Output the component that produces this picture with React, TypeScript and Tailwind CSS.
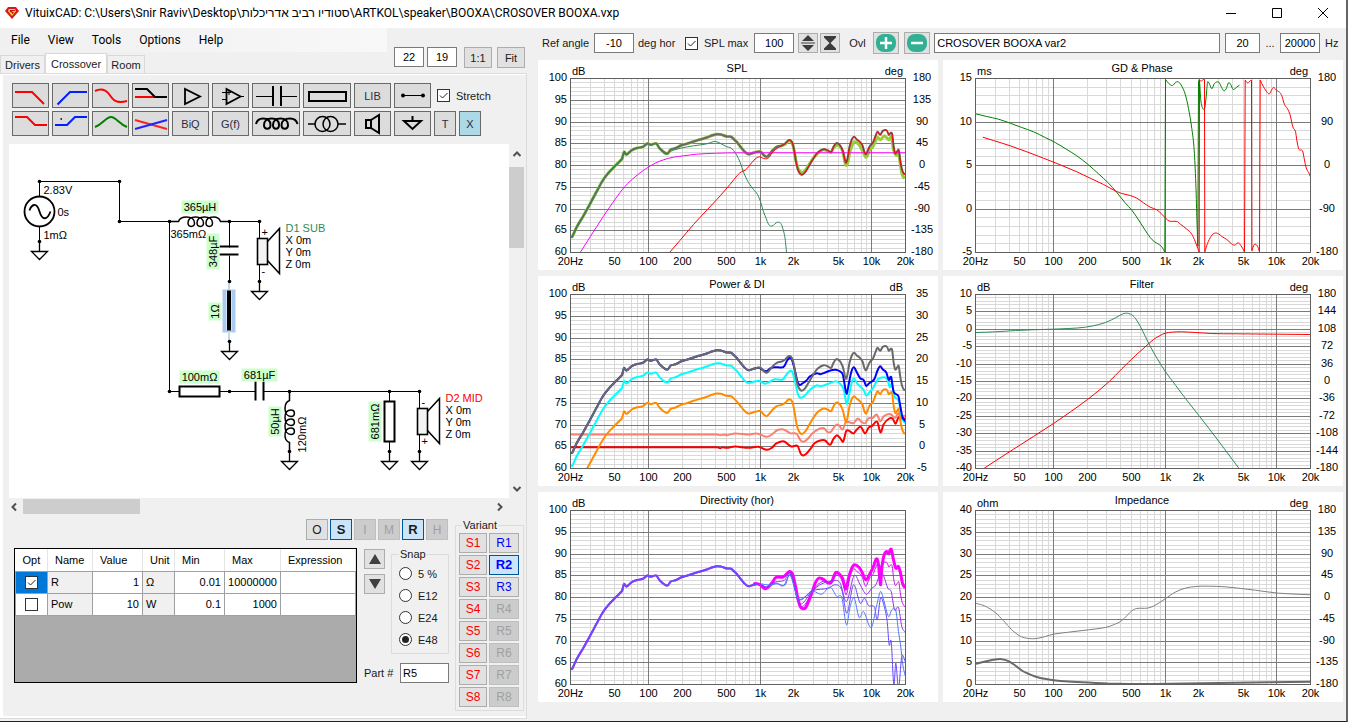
import { useState } from 'react';
import type { ReactNode } from 'react';
import clsx from 'clsx';

type Point = [number, number];

interface Trace {
  color: string;
  width?: number;
  points: Point[];
}

interface ChartProps {
  title: string;
  leftUnit: string;
  rightUnit?: string;
  leftLabels: string[];
  rightLabels?: string[];
  traces: Trace[];
}

// ---------------------------------------------------------------------------
// Measurement data. Three units per plot pixel, origin in the top left corner.
// ---------------------------------------------------------------------------

const sumLow: Point[] = [
  [2, 477], [6, 473], [18, 447], [38, 413], [58, 377], [78, 340], [98, 304], [114, 283], [133, 263],
  [148, 248], [155, 240], [158, 228], [161, 220], [167, 228], [175, 223], [184, 215], [197, 209], [217, 205], [231, 195],
  [241, 199], [257, 195], [267, 209], [279, 220], [291, 225], [301, 213], [315, 209], [331, 201], [349, 196], [369, 189],
  [389, 183], [409, 177], [424, 171], [439, 167], [451, 168], [469, 174], [482, 175], [491, 183], [501, 193], [511, 206],
  [521, 218], [529, 225], [537, 227], [549, 223], [561, 220],
];

const sumMid: Point[] = [
  [571, 220], [579, 229], [589, 235], [597, 227], [607, 215], [619, 205],
];

const sumHigh: Point[] = [
  [634, 201], [644, 195], [654, 185], [661, 186], [667, 197], [672, 221], [677, 253], [684, 278], [694, 289], [704, 281],
  [714, 265], [727, 243], [741, 223], [759, 212], [771, 215], [782, 220], [789, 205], [795, 196], [801, 194], [809, 201],
  [817, 217], [823, 243], [827, 253], [832, 235], [837, 205], [844, 183], [851, 175], [859, 183], [867, 189], [876, 201],
  [882, 221], [887, 227], [893, 213], [899, 201], [907, 193], [915, 173], [921, 160], [929, 169], [937, 157], [949, 156],
  [955, 169], [961, 163], [965, 167], [969, 201], [974, 225], [981, 217], [985, 215], [989, 245], [995, 275], [1003, 289],
];

const sum: Point[] = [...sumLow, ...sumMid, ...sumHigh];

const shift = (points: Point[], dy: number): Point[] => points.map(([x, y]) => [x, y + dy]);

const splTraces: Trace[] = [
  {
    color: '#9acd32',
    width: 3,
    points: [
      ...sumLow, ...sumMid, [634, 202], [644, 197], [654, 188], [661, 188], [667, 199], [672, 223], [677, 250], [684, 273],
      [694, 282], [704, 276], [727, 241], [741, 225], [759, 214], [782, 221], [790, 207], [801, 200], [809, 205], [817, 220],
      [825, 258], [831, 255], [838, 222], [844, 203], [851, 190], [867, 200], [880, 225], [887, 236], [899, 213], [907, 205],
      [915, 188], [921, 176], [929, 184], [942, 172], [955, 184], [963, 176], [969, 214], [977, 230], [985, 226], [990, 262],
      [996, 290], [1003, 300],
    ],
  },
  { color: '#696969', width: 2, points: sum },
  {
    color: '#ff00ff',
    points: [
      [29, 522], [59, 475], [99, 413], [134, 362], [164, 323], [194, 295], [224, 272], [254, 254], [279, 244], [309, 236],
      [339, 232], [379, 227], [439, 224], [499, 223], [700, 223], [1005, 223],
    ],
  },
  {
    color: '#2e8b57',
    points: [
      ...sumLow.slice(0, 22), [279, 224], [291, 227], [301, 218], [331, 209], [369, 202], [409, 196], [430, 189], [439, 190],
      [451, 195], [469, 205], [479, 207], [489, 216], [499, 230], [509, 252], [519, 281], [534, 312], [549, 333], [561, 348],
      [571, 372], [579, 400], [587, 420], [594, 437], [601, 443], [609, 440], [617, 433], [624, 431], [631, 435], [637, 450],
      [643, 475], [646, 500], [648, 522],
    ],
  },
  {
    color: '#ff0000',
    points: [
      [297, 522], [329, 485], [369, 438], [409, 395], [449, 352], [479, 317], [501, 290], [514, 279], [524, 275], [534, 265],
      [544, 252], [557, 239], [567, 235], [577, 239], [589, 241], [597, 235], [607, 220], [624, 207], ...sumHigh,
    ],
  },
];

const phaseTraces: Trace[] = [
  {
    color: '#008000',
    points: [
      [0, 106], [34, 114], [69, 122], [104, 134], [139, 147], [174, 160], [209, 177], [239, 192], [274, 213], [304, 232],
      [339, 259], [369, 286], [399, 314], [424, 342], [449, 373], [469, 395], [489, 424], [509, 455], [524, 477], [536, 489],
      [549, 497], [559, 505], [568, 521], [570, 3], [580, 15], [591, 21], [601, 11], [610, 11], [619, 23], [629, 47],
      [639, 90], [649, 150], [656, 215], [661, 315], [664, 415], [667, 503], [669, 8], [672, 8], [676, 65], [682, 90],
      [688, 87], [692, 55], [696, 12], [702, 17], [709, 31], [717, 15], [730, 11], [739, 28], [745, 37], [752, 31],
      [759, 13], [765, 17], [773, 33], [782, 27], [792, 20],
    ],
  },
  {
    color: '#ff0000',
    points: [
      [22, 176], [54, 186], [104, 202], [154, 220], [204, 239], [254, 259], [304, 280], [344, 299], [384, 318], [419, 337],
      [439, 345], [464, 351], [484, 359], [504, 373], [524, 386], [544, 394], [559, 407], [572, 421], [582, 428], [604, 429],
      [616, 438], [634, 452], [649, 467], [659, 489], [667, 510], [671, 521], [672, 3], [676, 8], [684, 3], [687, 3],
      [688, 520], [696, 495], [707, 473], [717, 464], [729, 466], [739, 474], [754, 483], [766, 494], [777, 500], [788, 493],
      [796, 501], [807, 520], [809, 5], [816, 13], [824, 7], [828, 5], [829, 517], [836, 498], [846, 503], [852, 520],
      [854, 5], [864, 25], [876, 43], [882, 46], [888, 35], [894, 27], [904, 36], [914, 43], [920, 55], [927, 78],
      [936, 91], [944, 110], [952, 145], [960, 159], [964, 185], [970, 212], [981, 217], [986, 240], [992, 268],
      [1000, 283], [1006, 297],
    ],
  },
];

const powerTraces: Trace[] = [
  { color: '#ff00ff', points: [[0, 261], [500, 261], [1005, 261]] },
  {
    color: '#ff0000',
    width: 2,
    points: [
      [0, 458], [439, 458], [449, 461], [456, 458], [467, 460], [494, 456], [534, 460], [564, 457], [589, 466], [604, 460],
      [616, 448], [639, 440], [662, 456], [681, 454], [691, 478], [699, 483], [709, 476], [722, 460], [732, 446], [749, 438],
      [764, 438], [779, 451], [789, 433], [799, 422], [809, 431], [818, 441], [828, 408], [849, 417], [859, 405], [871, 397],
      [884, 417], [894, 400], [904, 395], [920, 382], [930, 414], [939, 390], [956, 372], [967, 373], [975, 388], [984, 368],
      [992, 372], [999, 370], [1004, 378],
    ],
  },
  {
    color: '#fa8072',
    width: 2,
    points: [
      [0, 420], [439, 420], [449, 422], [464, 420], [469, 422], [494, 417], [534, 420], [559, 417], [589, 427], [604, 420],
      [619, 408], [639, 405], [659, 416], [679, 418], [689, 436], [699, 442], [712, 433], [726, 416], [744, 404], [760, 401],
      [772, 413], [782, 411], [794, 394], [804, 391], [817, 405], [826, 383], [849, 386], [862, 372], [874, 383], [884, 386],
      [894, 371], [906, 371], [919, 360], [929, 380], [939, 366], [952, 359], [962, 360], [974, 370], [982, 358], [992, 365],
      [1004, 364],
    ],
  },
  { color: '#ff8c00', width: 2, points: shift(sum, 130) },
  {
    color: '#00ffff',
    width: 2,
    points: [
      ...shift(sumLow, 39), [567, 259], [584, 268], [599, 261], [612, 254], [636, 255], [646, 243], [658, 229], [666, 233],
      [674, 263], [682, 298], [690, 310], [702, 304], [719, 285], [739, 272], [749, 275], [774, 268], [796, 260], [809, 268],
      [819, 283], [824, 308], [829, 328], [836, 300], [844, 263], [851, 252], [859, 266], [872, 278], [879, 286], [887, 303],
      [897, 293], [908, 280], [916, 265], [924, 253], [931, 250], [944, 249], [952, 258], [958, 278], [964, 268], [972, 306],
      [984, 318], [991, 353], [998, 378], [1004, 386],
    ],
  },
  {
    color: '#0000ff',
    width: 2,
    points: [
      ...sumLow, [567, 220], [579, 228], [589, 230], [599, 222], [611, 218], [634, 219], [642, 214], [650, 198], [657, 190],
      [664, 194], [672, 223], [680, 258], [687, 271], [697, 266], [707, 259], [719, 245], [739, 236], [749, 239], [764, 234],
      [779, 228], [796, 226], [809, 231], [817, 240], [822, 268], [828, 298], [834, 273], [842, 233], [850, 218], [859, 233],
      [869, 251], [879, 256], [887, 274], [896, 266], [904, 261], [912, 253], [921, 228], [929, 215], [937, 225], [947, 233],
      [955, 256], [962, 248], [969, 290], [979, 300], [984, 306], [990, 338], [996, 368], [1004, 380],
    ],
  },
  { color: '#696969', width: 2, points: sum },
];

const filterTraces: Trace[] = [
  {
    color: '#2e8b57',
    points: [
      [0, 114], [60, 112], [120, 108], [170, 106], [230, 104], [280, 102], [330, 98], [370, 90], [395, 82], [420, 70],
      [440, 59], [450, 56], [460, 57], [470, 62], [480, 72], [495, 97], [510, 127], [525, 157], [545, 192], [570, 232],
      [600, 272], [640, 325], [700, 401], [790, 521],
    ],
  },
  {
    color: '#ff0000',
    points: [
      [26, 521], [114, 464], [234, 387], [336, 315], [399, 263], [439, 223], [479, 184], [509, 157], [534, 135], [554, 123],
      [569, 116], [589, 113], [619, 112], [659, 114], [709, 117], [779, 118], [1008, 120],
    ],
  },
];

const directivityTraces: Trace[] = [
  { color: '#ff00ff', width: 2, points: sumLow },
  {
    color: '#ff00ff',
    width: 3,
    points: [
      [549, 221], [554, 219], [569, 223], [584, 235], [594, 229], [606, 215], [616, 201], [636, 200], [646, 193],
      [657, 183], [666, 191], [674, 223], [682, 263], [689, 288], [697, 295], [706, 291], [714, 273], [724, 248], [734, 218],
      [744, 203], [756, 205], [774, 218], [784, 213], [794, 188], [804, 188], [816, 203], [826, 236], [834, 203], [844, 173],
      [852, 163], [866, 171], [876, 188], [886, 208], [899, 188], [907, 173], [918, 145], [924, 163], [930, 223], [934, 173],
      [941, 133], [949, 123], [954, 130], [962, 116], [969, 148], [976, 173], [984, 168], [990, 188], [996, 218], [1004, 233],
    ],
  },
  { color: '#c814f0', points: sumHigh },
  {
    color: '#9630f0',
    points: [
      [571, 222], [589, 230], [607, 217], [624, 213], [642, 209], [659, 188], [684, 273], [697, 278], [724, 243], [754, 220],
      [794, 210], [809, 218], [828, 273], [851, 195], [869, 223], [887, 251], [904, 233], [916, 223], [930, 188], [939, 195],
      [952, 233], [962, 243], [972, 298], [984, 291], [994, 348], [1004, 366],
    ],
  },
  {
    color: '#6446ff',
    points: [
      [571, 222], [591, 230], [614, 218], [644, 223], [659, 190], [684, 266], [724, 241], [774, 233], [794, 223], [814, 238],
      [829, 308], [849, 223], [869, 278], [882, 263], [894, 285], [912, 290], [920, 328], [930, 263], [940, 283], [950, 333],
      [956, 403], [962, 393], [970, 523], [976, 458], [984, 533], [994, 438], [1004, 453],
    ],
  },
  {
    color: '#5078ff',
    points: [
      [571, 220], [600, 224], [620, 220], [639, 226], [659, 195], [682, 263], [709, 255], [729, 243], [754, 251], [779, 230],
      [799, 258], [814, 261], [828, 343], [839, 288], [851, 263], [866, 321], [879, 303], [902, 351], [919, 283], [930, 243],
      [938, 263], [954, 318], [964, 298], [976, 300], [984, 363], [990, 403], [997, 463], [1004, 496],
    ],
  },
  { color: '#644cff', width: 2, points: sumLow },
];

const impedanceTraces: Trace[] = [
  {
    color: '#808080',
    points: [
      [0, 278], [29, 287], [59, 306], [84, 331], [109, 358], [134, 377], [159, 384], [184, 384], [209, 378], [234, 371],
      [279, 365], [339, 358], [389, 351], [414, 343], [439, 330], [469, 301], [484, 294], [514, 293], [534, 287], [569, 265],
      [599, 245], [629, 233], [659, 228], [699, 227], [749, 229], [839, 239], [909, 248], [1008, 253],
    ],
  },
  {
    color: '#696969',
    width: 2,
    points: [
      [0, 460], [29, 453], [59, 447], [79, 446], [99, 452], [119, 465], [139, 480], [159, 490], [189, 501], [234, 509],
      [279, 513], [339, 516], [429, 520], [579, 520], [679, 518], [779, 517], [879, 515], [1008, 514],
    ],
  },
];

const splAxis = ['100', '95', '90', '85', '80', '75', '70', '65', '60'];
const phaseAxis = ['180', '135', '90', '45', '0', '-45', '-90', '-135', '-180'];

const charts: ChartProps[] = [
  { title: 'SPL', leftUnit: 'dB', rightUnit: 'deg', leftLabels: splAxis, rightLabels: phaseAxis, traces: splTraces },
  {
    title: 'GD & Phase',
    leftUnit: 'ms',
    rightUnit: 'deg',
    leftLabels: ['15', '10', '5', '0', '-5'],
    rightLabels: ['180', '90', '0', '-90', '-180'],
    traces: phaseTraces,
  },
  {
    title: 'Power & DI',
    leftUnit: 'dB',
    rightUnit: 'dB',
    leftLabels: splAxis,
    rightLabels: ['35', '30', '25', '20', '15', '10', '5', '0', '-5'],
    traces: powerTraces,
  },
  {
    title: 'Filter',
    leftUnit: 'dB',
    rightUnit: 'deg',
    leftLabels: ['10', '5', '0', '-5', '-10', '-15', '-20', '-25', '-30', '-35', '-40'],
    rightLabels: ['180', '144', '108', '72', '36', '0', '-36', '-72', '-108', '-144', '-180'],
    traces: filterTraces,
  },
  { title: 'Directivity (hor)', leftUnit: 'dB', leftLabels: splAxis, traces: directivityTraces },
  {
    title: 'Impedance',
    leftUnit: 'ohm',
    rightUnit: 'deg',
    leftLabels: ['40', '35', '30', '25', '20', '15', '10', '5', '0'],
    rightLabels: phaseAxis,
    traces: impedanceTraces,
  },
];

// ---------------------------------------------------------------------------
// Chart
// ---------------------------------------------------------------------------

const PLOT = { x: 32, y: 18, w: 335, h: 174 };

const freqLabels: [number, string][] = [
  [20, '20Hz'], [50, '50'], [100, '100'], [200, '200'], [500, '500'],
  [1000, '1k'], [2000, '2k'], [5000, '5k'], [10000, '10k'], [20000, '20k'],
];

const gridFreqs = [10, 100, 1000, 10000]
  .flatMap((decade) => [1, 2, 3, 4, 5, 6, 7, 8, 9].map((n) => n * decade))
  .filter((f) => f > 20 && f < 20000);

const freqX = (f: number) => Math.round(PLOT.x + (PLOT.w * Math.log10(f / 20)) / 3) + 0.5;

/** A phase wrap: the curve jumps over most of the plot height */
const isWrap = (a: number[], b: number[]) => Math.abs(a[1] - b[1]) > 60 && Math.abs(a[0] - b[0]) < 2;

function tracePath(points: Point[]) {
  const p = points.map(([x, y]) => [PLOT.x + 0.5 + x / 3, PLOT.y + 0.5 + y / 3]);
  let d = `M${p[0][0].toFixed(1)} ${p[0][1].toFixed(1)}`;
  for (let i = 1; i < p.length; i++) {
    const a = p[i - 1];
    const b = p[i];
    if (isWrap(a, b)) {
      d += `L${b[0].toFixed(1)} ${b[1].toFixed(1)}`;
      continue;
    }
    const before = i > 1 && !isWrap(p[i - 2], a) ? p[i - 2] : a;
    const after = i < p.length - 1 && !isWrap(b, p[i + 1]) ? p[i + 1] : b;
    // keep the handles inside the segment so that long steps do not overshoot
    const step = b[0] - a[0];
    const slopeIn = (b[1] - before[1]) / (b[0] - before[0] || 1);
    const slopeOut = (after[1] - a[1]) / (after[0] - a[0] || 1);
    const c1 = [a[0] + step / 3, a[1] + (slopeIn * step) / 3];
    const c2 = [b[0] - step / 3, b[1] - (slopeOut * step) / 3];
    d += `C${[...c1, ...c2, ...b].map((n) => n.toFixed(1)).join(' ')}`;
  }
  return d;
}

function Chart({ title, leftUnit, rightUnit, leftLabels, rightLabels, traces }: ChartProps) {
  const divisions = leftLabels.length - 1;
  const rowY = (i: number, of: number) => Math.round(PLOT.y + (PLOT.h * i) / of) + 0.5;
  const clipId = `plot-${title.replace(/\W/g, '')}`;
  const right = PLOT.x + PLOT.w;
  const bottom = PLOT.y + PLOT.h;

  return (
    <figure className="bg-white">
      <svg viewBox="0 0 400 210" role="img" aria-label={title} className="block h-auto w-full text-[11px]" fill="black">
        <clipPath id={clipId}>
          <rect x={PLOT.x} y={PLOT.y} width={PLOT.w + 1} height={PLOT.h + 1} />
        </clipPath>

        <g stroke="#d9d9d9" shapeRendering="crispEdges">
          {Array.from({ length: divisions * 5 }, (_, i) => (
            <line key={i} x1={PLOT.x} x2={right} y1={rowY(i, divisions * 5)} y2={rowY(i, divisions * 5)} />
          ))}
          {gridFreqs.map((f) => (
            <line key={f} x1={freqX(f)} x2={freqX(f)} y1={PLOT.y} y2={bottom} />
          ))}
        </g>
        <g stroke="#7b7b7b" shapeRendering="crispEdges">
          {leftLabels.map((label, i) => (
            <line key={label} x1={PLOT.x} x2={right} y1={rowY(i, divisions)} y2={rowY(i, divisions)} />
          ))}
          {[100, 1000, 10000].map((f) => (
            <line key={f} x1={freqX(f)} x2={freqX(f)} y1={PLOT.y} y2={bottom} />
          ))}
        </g>

        <g clipPath={`url(#${clipId})`} fill="none" strokeLinejoin="round">
          {traces.map((trace, i) => (
            <path key={i} d={tracePath(trace.points)} stroke={trace.color} strokeWidth={trace.width ?? 1} />
          ))}
        </g>
        <rect x={PLOT.x + 0.5} y={PLOT.y + 0.5} width={PLOT.w} height={PLOT.h} fill="none" stroke="#606060" shapeRendering="crispEdges" />

        <text x={199} y={12} textAnchor="middle">{title}</text>
        <text x={34} y={15}>{leftUnit}</text>
        {rightUnit && <text x={365} y={15} textAnchor="end">{rightUnit}</text>}
        {leftLabels.map((label, i) => (
          <text key={label} x={29} y={rowY(i, divisions) + 2.5} textAnchor="end">{label}</text>
        ))}
        {rightLabels?.map((label, i) => (
          <text key={label} x={384} y={rowY(i, divisions) + 2.5} textAnchor="middle">{label}</text>
        ))}
        {freqLabels.map(([f, label]) => (
          <text key={f} x={freqX(f)} y={205} textAnchor="middle">{label}</text>
        ))}
      </svg>
    </figure>
  );
}

// ---------------------------------------------------------------------------
// Small controls
// ---------------------------------------------------------------------------

function CheckBox({ name, defaultChecked }: { name?: string; defaultChecked?: boolean }) {
  return (
    <span className="relative block size-[13px]">
      <input
        type="checkbox"
        aria-label={name}
        defaultChecked={defaultChecked}
        className="peer block size-[13px] appearance-none border border-[#333] bg-white"
      />
      <svg viewBox="0 0 13 13" className="pointer-events-none absolute inset-0 hidden peer-checked:block" fill="none" stroke="#222" aria-hidden="true">
        <path d="M3 6.500l2.500 2.500L10.500 4" />
      </svg>
    </span>
  );
}

function Check({ label, defaultChecked }: { label: string; defaultChecked?: boolean }) {
  return (
    <label className="inline-flex items-center gap-[6px]">
      <CheckBox defaultChecked={defaultChecked} />
      {label}
    </label>
  );
}

function NumberBox({ label, value, className }: { label: string; value: string; className: string }) {
  return (
    <input
      aria-label={label}
      defaultValue={value}
      className={clsx('h-[20px] border border-[#7a7a7a] bg-white px-[2px] text-black', className)}
    />
  );
}

function ToolButton({ label, children, className }: { label: string; children: ReactNode; className?: string }) {
  return (
    <button
      type="button"
      aria-label={label}
      className={clsx(
        'flex h-[25px] items-center justify-center border border-[#696969] text-[11px] text-[#2b2b45]',
        className ?? 'w-[37px] bg-[#dcdcdc]',
      )}
    >
      {children}
    </button>
  );
}

function ToolIcon({ wide, children }: { wide?: boolean; children: ReactNode }) {
  return (
    <svg
      viewBox={wide ? '0 0 46 23' : '0 0 35 23'}
      className={clsx('h-[23px] shrink-0', wide ? 'w-[46px]' : 'w-[35px]')}
      fill="none"
      strokeWidth={2}
      stroke="black"
      aria-hidden="true"
    >
      {children}
    </svg>
  );
}

// ---------------------------------------------------------------------------
// Component toolbar
// ---------------------------------------------------------------------------

const WIDE = 'w-[48px] bg-[#dcdcdc]';

function PartToolbar() {
  return (
    <div className="flex flex-col gap-[3px] pl-[9px]">
      <div className="flex gap-[3px]">
        <ToolButton label="Low pass">
          <ToolIcon><path d="M2 8h17l12 12" stroke="#f00" /></ToolIcon>
        </ToolButton>
        <ToolButton label="High pass">
          <ToolIcon><path d="M4.500 20.500L17 8h17" stroke="#0020ff" /></ToolIcon>
        </ToolButton>
        <ToolButton label="Shelf">
          <ToolIcon><path d="M2 7C8 4 12 5 16 10C20 16 23 20 34 17" stroke="#f00" /></ToolIcon>
        </ToolButton>
        <ToolButton label="Shelving low pass">
          <ToolIcon>
            <path d="M2 13h21" stroke="#f00" />
            <path d="M2 5h12l8 8h12" />
          </ToolIcon>
        </ToolButton>
        <ToolButton label="Buffer">
          <ToolIcon><path d="M12 5v15l15-7.500z" strokeWidth={1.8} /></ToolIcon>
        </ToolButton>
        <ToolButton label="Operational amplifier">
          <ToolIcon>
            <path d="M13.500 5v15l14-7.500z" strokeWidth={1.800} />
            <path d="M27 12.500h4M9 8.500h9M9 15.500h5M16 6v5" strokeWidth={1} />
          </ToolIcon>
        </ToolButton>
        <ToolButton label="Capacitor" className={WIDE}>
          <ToolIcon wide>
            <path d="M3 12.500h16M28 12.500h16" strokeWidth={1} />
            <path d="M20 2v20M28 2v20" />
          </ToolIcon>
        </ToolButton>
        <ToolButton label="Resistor" className={WIDE}>
          <ToolIcon wide><path d="M5 8h37v9H5z" /></ToolIcon>
        </ToolButton>
        <ToolButton label="Library">LIB</ToolButton>
        <ToolButton label="Wire">
          <ToolIcon>
            <path d="M8 11.500h20" strokeWidth={1} />
            <circle cx="8" cy="11.500" r="2" fill="black" stroke="none" />
            <circle cx="28" cy="11.500" r="2" fill="black" stroke="none" />
          </ToolIcon>
        </ToolButton>
        <div className="flex items-center pl-[3px]">
          <Check label="Stretch" defaultChecked />
        </div>
      </div>

      <div className="flex gap-[3px]">
        <ToolButton label="Low shelf">
          <ToolIcon><path d="M2 5h12l8 8h12" stroke="#f00" /></ToolIcon>
        </ToolButton>
        <ToolButton label="High shelf">
          <ToolIcon>
            <path d="M2 13h12l8-8h12" stroke="#0020ff" />
            <path d="M7.500 7h1.500" strokeWidth={1.500} />
          </ToolIcon>
        </ToolButton>
        <ToolButton label="Peak">
          <ToolIcon><path d="M2 15C10 12 13 5 18 5S26 12 34 15" stroke="#008000" /></ToolIcon>
        </ToolButton>
        <ToolButton label="Crossed">
          <ToolIcon>
            <path d="M2 8l32 9" stroke="#f22" />
            <path d="M2 17l32-9" stroke="#22f" />
          </ToolIcon>
        </ToolButton>
        <ToolButton label="Biquad">BiQ</ToolButton>
        <ToolButton label="Transfer function">G(f)</ToolButton>
        <ToolButton label="Inductor" className={WIDE}>
          <ToolIcon wide>
            <path d="M3 12C4 8 7 6.500 10 6.500C15 6.500 17.500 9 17.500 13C17.500 18 11 18 11 13C11 9 14 6.500 18.500 6.500C24 6.500 26 9 26 13C26 18 20 18 20 13C20 9 23 6.500 27.500 6.500C32 6.500 35 9 35 13C35 18 28.500 18 28.500 13C28.500 9 32 6.500 37 6.500C41 6.500 43.500 8 44.500 12" />
          </ToolIcon>
        </ToolButton>
        <ToolButton label="Transformer" className={WIDE}>
          <ToolIcon wide>
            <path d="M4 12h7M34 12h8" strokeWidth={1.500} />
            <circle cx="18.500" cy="12" r="7.500" strokeWidth={1.500} />
            <circle cx="26.500" cy="12" r="7.500" strokeWidth={1.500} />
          </ToolIcon>
        </ToolButton>
        <ToolButton label="Driver">
          <ToolIcon><path d="M11 8h5v8h-5zM16 8l8-5v18l-8-5" /></ToolIcon>
        </ToolButton>
        <ToolButton label="Ground">
          <ToolIcon><path d="M17.500 4v5M9 9h17l-8.500 8z" /></ToolIcon>
        </ToolButton>
        <ToolButton label="Text" className="w-[22px] bg-[#dcdcdc]">T</ToolButton>
        <ToolButton label="Delete" className="w-[22px] bg-[#add8e6]">X</ToolButton>
      </div>
    </div>
  );
}

// ---------------------------------------------------------------------------
// Schematic
// ---------------------------------------------------------------------------

const nodes: Point[] = [
  [30, 37], [110, 37], [110, 77], [160, 77], [220, 77], [250, 77], [220, 137], [250, 137], [220, 197], [30, 97],
  [160, 247], [220, 247], [280, 247], [280, 307], [380, 247], [410, 247], [380, 307], [410, 307],
];

const grounds: Point[] = [[30, 97], [250, 137], [220, 197], [280, 307], [380, 307], [410, 307]];

function ValueLabel({ x, y, w, h, text, vertical }: { x: number; y: number; w: number; h: number; text: string; vertical?: boolean }) {
  const cx = x + w / 2;
  const cy = y + h / 2;
  return (
    <g>
      <rect x={x} y={y} width={w} height={h} fill="#ccffcc" />
      <text x={cx} y={cy + 4} textAnchor="middle" transform={vertical ? `rotate(-90 ${cx} ${cy})` : undefined}>
        {text}
      </text>
    </g>
  );
}

function Coil({ transform }: { transform: string }) {
  return (
    <path
      transform={transform}
      d="M0 0H9C10 -3 13 -4.500 17 -4.500C22 -4.500 25 -2 25 1.500C25 6 18.500 6 18.500 1.500C18.500 -2 21 -4.500 26 -4.500C31 -4.500 34 -2 34 1.500C34 6 27.500 6 27.500 1.500C27.500 -2 30 -4.500 35 -4.500C40 -4.500 43 -2 43 1.500C43 6 36.500 6 36.500 1.500C36.500 -2 39 -4.500 44 -4.500C48 -4.500 50 -3 51 0H60"
      strokeWidth={1.500}
      fill="none"
    />
  );
}

function Driver({ x, y, name, color, inverted }: { x: number; y: number; name: string; color: string; inverted?: boolean }) {
  return (
    <g>
      <path d={`M${x} ${y - 30}v17M${x} ${y + 13}v17`} />
      <rect x={x - 2} y={y - 13} width={10} height={26} fill="#f4f4f4" strokeWidth={1.600} />
      <path d={`M${x + 8} ${y - 10}l12 -13v45l-12 -13`} fill="none" strokeWidth={1.500} />
      <g stroke="none">
        <text x={x + 2} y={y - 16}>{inverted ? '-' : '+'}</text>
        <text x={x + 2} y={y + 23}>{inverted ? '+' : '-'}</text>
        <text x={x + 26} y={y - 20} fill={color}>{name}</text>
        <text x={x + 26} y={y - 8}>X 0m</text>
        <text x={x + 26} y={y + 4}>Y 0m</text>
        <text x={x + 26} y={y + 16}>Z 0m</text>
      </g>
    </g>
  );
}

function Schematic() {
  return (
    <svg viewBox="0 0 500 354" className="block h-[354px] w-[500px] text-[11px]" role="img" aria-label="Crossover schematic">
      <g transform="translate(0.5 0.5)" stroke="black">
        {/* wires */}
        <path
          d="M30 52V37H110V77H160M30 82V97M160 77V247H170M210 247H246M220 77H250M220 77V103M220 111V137M254 247H410M380 247V257M380 297V307"
          fill="none"
        />

        {/* generator */}
        <circle cx={30} cy={67} r={15} fill="none" strokeWidth={1.800} />
        <path d="M20 66C22 60 27 57 30 67S38 75 41 67" fill="none" strokeWidth={1.800} />

        <Coil transform="translate(160 77)" />
        <Coil transform="translate(280 247) rotate(90) scale(1 -1)" />

        {/* capacitors */}
        <path d="M210 102H229M210 110H229M246 237V256M254 237V256" strokeWidth={2} />

        {/* resistors */}
        <rect x={170} y={242} width={40} height={10} fill="white" strokeWidth={2} />
        <rect x={375} y={257} width={10} height={40} fill="white" strokeWidth={2} />

        {/* selected resistor */}
        <path d="M219.500 137v9M219.500 189v8" stroke="#7fb2e8" strokeDasharray="1 1" strokeWidth={2} />
        <rect x={213} y={145} width={13} height={43} fill="#a9cbf0" stroke="none" />
        <rect x={217} y={146} width={5} height={40} fill="white" stroke="none" />
        <path d="M219.500 146v40" strokeWidth={4} />

        {grounds.map(([x, y]) => (
          <path key={`${x}-${y}`} d={`M${x} ${y}v10M${x - 8} ${y + 10}h16l-8 8z`} fill="none" strokeWidth={1.300} />
        ))}
        {nodes.map(([x, y]) => (
          <circle key={`${x}-${y}`} cx={x} cy={y} r={1.800} stroke="none" />
        ))}

        <Driver x={250} y={107} name="D1 SUB" color="#2e8b57" />
        <Driver x={410} y={277} name="D2 MID" color="#f00" inverted />

        <g stroke="none">
          <text x={34} y={49}>2.83V</text>
          <text x={48} y={71}>0s</text>
          <text x={34} y={94}>1mΩ</text>
          <text x={161} y={93}>365mΩ</text>
          <text x={292} y={294} textAnchor="middle" transform="rotate(-90 292 290)">120mΩ</text>
          <ValueLabel x={172} y={56} w={37} h={13} text="365µH" />
          <ValueLabel x={197} y={89} w={13} h={36} text="348µF" vertical />
          <ValueLabel x={199} y={158} w={13} h={18} text="1Ω" vertical />
          <ValueLabel x={170} y={226} w={40} h={13} text="100mΩ" />
          <ValueLabel x={232} y={224} w={36} h={13} text="681µF" />
          <ValueLabel x={259} y={262} w={13} h={30} text="50µH" vertical />
          <ValueLabel x={359} y={257} w={13} h={40} text="681mΩ" vertical />
        </g>
      </g>
    </svg>
  );
}

function ScrollArrow({ label, d, className }: { label: string; d: string; className: string }) {
  return (
    <button type="button" aria-label={label} className={clsx('flex shrink-0 items-center justify-center', className)}>
      <svg viewBox="0 0 10 10" className="size-[10px]" fill="none" stroke="#505050" strokeWidth={2} aria-hidden="true">
        <path d={d} />
      </svg>
    </button>
  );
}

function SchematicPane() {
  return (
    <div className="grid grid-cols-[1fr_17px] pl-[6px]">
      <div className="overflow-hidden bg-white">
        <Schematic />
      </div>
      <div className="flex flex-col">
        <ScrollArrow label="Scroll up" d="M1.500 7L5 3.500L8.500 7" className="h-[19px] w-[15px]" />
        <div className="mt-[4px] h-[81px] w-[15px] bg-[#cdcdcd]" />
        <ScrollArrow label="Scroll down" d="M1.500 3L5 6.500L8.500 3" className="mt-auto h-[18px] w-[15px]" />
      </div>
      <div className="flex items-center pt-[1px]">
        <ScrollArrow label="Scroll left" d="M7 1.500L3.500 5L7 8.500" className="mr-[4px] h-[15px] w-[10px]" />
        <div className="h-[15px] w-[117px] bg-[#cdcdcd]" />
        <ScrollArrow label="Scroll right" d="M3 1.500L6.500 5L3 8.500" className="ml-auto h-[15px] w-[18px]" />
      </div>
    </div>
  );
}

// ---------------------------------------------------------------------------
// Bottom section of the crossover page
// ---------------------------------------------------------------------------

const modes = [
  { id: 'O', state: 'normal' },
  { id: 'S', state: 'active' },
  { id: 'I', state: 'disabled' },
  { id: 'M', state: 'disabled' },
  { id: 'R', state: 'active' },
  { id: 'H', state: 'disabled' },
];

const buttonState: Record<string, string> = {
  normal: 'border-[#adadad] bg-[#e1e1e1] text-[12px]',
  active: 'border-[#005499] bg-[#cce4f7] font-bold text-[13px]',
  disabled: 'border-[#bfbfbf] bg-[#cccccc] text-[12px] text-[#a0a0a0]',
};

const params = [
  { opt: true, name: 'R', value: '1', unit: 'Ω', min: '0.01', max: '10000000' },
  { opt: false, name: 'Pow', value: '10', unit: 'W', min: '0.1', max: '1000' },
];

function ParamTable() {
  return (
    <div className="h-[135px] w-[343px] border border-black bg-[#ababab]">
      <table className="w-full table-fixed border-collapse bg-white text-[11px] text-black">
        <colgroup>
          <col className="w-[32px]" />
          <col className="w-[45px]" />
          <col className="w-[50px]" />
          <col className="w-[32px]" />
          <col className="w-[50px]" />
          <col className="w-[56px]" />
          <col />
        </colgroup>
        <thead>
          <tr className="h-[22px]">
            {['Opt', 'Name', 'Value', 'Unit', 'Min', 'Max', 'Expression'].map((head) => (
              <th
                key={head}
                scope="col"
                className="border-r border-b border-r-[#e5e5e5] border-b-[#a0a0a0] p-0 pl-[7px] text-left font-normal"
              >
                {head}
              </th>
            ))}
          </tr>
        </thead>
        <tbody>
          {params.map((param) => (
            <tr key={param.name} className="h-[22px] *:border *:border-[#a0a0a0] *:px-[3px] *:py-0">
              <td className={clsx(param.opt && 'bg-[#0078d7]')}>
                <div className="flex justify-center">
                  <CheckBox name={`Optimize ${param.name}`} defaultChecked={param.opt} />
                </div>
              </td>
              <td className="bg-[#f0f0f0]">{param.name}</td>
              <td className="text-right">{param.value}</td>
              <td className="bg-[#f0f0f0]">{param.unit}</td>
              <td className="text-right">{param.min}</td>
              <td className="text-right">{param.max}</td>
              <td />
            </tr>
          ))}
        </tbody>
      </table>
    </div>
  );
}

function StepButton({ label, d }: { label: string; d: string }) {
  return (
    <button type="button" aria-label={label} className="flex h-[20px] w-[21px] items-center justify-center border border-[#adadad] bg-[#e1e1e1]">
      <svg viewBox="0 0 14 12" className="h-[12px] w-[14px]" fill="#404040" aria-hidden="true">
        <path d={d} />
      </svg>
    </button>
  );
}

function SnapGroup() {
  const [snap, setSnap] = useState('E48');
  return (
    <fieldset className="ml-[6px] h-[106px] w-[58px] border border-[#dcdcdc] pl-[7px]">
      <legend className="px-[1px] leading-[12px]">Snap</legend>
      <div className="flex flex-col gap-[7px] pt-[6px]">
        {['5 %', 'E12', 'E24', 'E48'].map((step) => (
          <label key={step} className="flex h-[15px] items-center gap-[6px]">
            <input
              type="radio"
              name="snap"
              checked={snap === step}
              onChange={() => setSnap(step)}
              className="grid size-[13px] shrink-0 appearance-none place-content-center rounded-full border border-[#333] bg-white checked:before:size-[7px] checked:before:rounded-full checked:before:bg-[#222] checked:before:content-['']"
            />
            {step}
          </label>
        ))}
      </div>
    </fieldset>
  );
}

function VariantGroup() {
  return (
    <fieldset className="h-[192px] w-[69px] border border-[#dcdcdc] pl-[3px]">
      <legend className="ml-[3px] px-[1px] leading-[12px]">Variant</legend>
      <div className="grid grid-cols-[28px_30px] gap-[2px] pt-[2px]">
        {[1, 2, 3, 4, 5, 6, 7, 8].map((n) => (
          <div key={n} className="contents">
            <button type="button" className="h-[20px] border border-[#adadad] bg-[#e1e1e1] text-[12px] text-[#f00]">
              S{n}
            </button>
            <button
              type="button"
              disabled={n > 3}
              className={clsx('h-[20px] border', buttonState[n === 2 ? 'active' : n > 3 ? 'disabled' : 'normal'], n < 4 && 'text-[#0000ff]')}
            >
              R{n}
            </button>
          </div>
        ))}
      </div>
    </fieldset>
  );
}

function PartEditor() {
  return (
    <div className="flex justify-between pt-[5px] pr-[2px] pl-[11px]">
      <div className="flex flex-col">
        <div className="flex justify-end gap-[2px] pr-px">
          {modes.map(({ id, state }) => (
            <button
              key={id}
              type="button"
              disabled={state === 'disabled'}
              className={clsx('h-[21px] w-[22px] border', buttonState[state])}
            >
              {id}
            </button>
          ))}
        </div>
        <div className="flex pt-[8px]">
          <ParamTable />
          <div className="flex flex-col pl-[7px]">
            <div className="flex">
              <div className="flex flex-col gap-[5px] pt-px">
                <StepButton label="Move up" d="M7 1l6 10H1z" />
                <StepButton label="Move down" d="M7 11L1 1h12z" />
              </div>
              <SnapGroup />
            </div>
            <label className="mt-auto flex items-center justify-between">
              Part #
              <NumberBox label="Part number" value="R5" className="w-[49px]" />
            </label>
          </div>
        </div>
      </div>
      <VariantGroup />
    </div>
  );
}

// ---------------------------------------------------------------------------
// Window
// ---------------------------------------------------------------------------

function TitleBar() {
  return (
    <header className="flex h-[28px] items-center bg-white pr-[17px] pb-[3px] pl-[5px] text-[12px] text-black">
      <svg viewBox="0 0 14 12" className="h-[12px] w-[14px]" aria-hidden="true">
        <path d="M3 0h8l3 4-7 8-7-8z" fill="#d81818" />
        <path d="M4 2h6l1 2-4 5-4-5z" fill="#ffd83a" />
        <path d="M5 3h5v1H6.500L9 5.500 7 7.500V6L4.500 4.500z" fill="#c01818" />
      </svg>
      <h1 className="ml-[6px] flex-1 truncate font-['Roboto','Liberation_Sans',sans-serif]">
        {'VituixCAD: C:\\Users\\Snir Raviv\\Desktop\\סטודיו רביב אדריכלות\\ARTKOL\\speaker\\BOOXA\\CROSOVER BOOXA.vxp'}
      </h1>
      <div className="flex gap-[34px]">
        <button type="button" aria-label="Minimize">
          <svg viewBox="0 0 12 12" className="size-[12px]" stroke="black" fill="none" aria-hidden="true"><path d="M1 6.500h10" /></svg>
        </button>
        <button type="button" aria-label="Maximize">
          <svg viewBox="0 0 12 12" className="size-[12px]" stroke="black" fill="none" aria-hidden="true"><path d="M1.500 1.500h9v9h-9z" /></svg>
        </button>
        <button type="button" aria-label="Close">
          <svg viewBox="0 0 12 12" className="size-[12px]" stroke="black" fill="none" aria-hidden="true"><path d="M1 1l10 10M11 1L1 11" /></svg>
        </button>
      </div>
    </header>
  );
}

function CrossoverPanel() {
  return (
    <section className="flex w-[530px] shrink-0 flex-col">
      <div className="flex h-[45px]">
        <div className="flex w-[387px] flex-col justify-between">
          <nav className="flex h-[24px] items-center gap-[18px] bg-linear-to-r from-[#f0f0f0] to-[#f8f8f8] pl-[11px] font-['Roboto','Liberation_Sans',sans-serif] text-[12px] text-black">
            {['File', 'View', 'Tools', 'Options', 'Help'].map((item) => (
              <button key={item} type="button">{item}</button>
            ))}
          </nav>
          <div role="tablist" className="flex items-end">
            {['Drivers', 'Crossover', 'Room'].map((tab) => (
              <button
                key={tab}
                type="button"
                role="tab"
                aria-selected={tab === 'Crossover'}
                className={clsx(
                  'border-x border-t border-[#d9d9d9]',
                  tab === 'Crossover' ? 'h-[20px] w-[62px] bg-white' : 'h-[18px] bg-[#f0f0f0]',
                  tab === 'Drivers' && 'w-[45px]',
                  tab === 'Room' && 'w-[38px]',
                )}
              >
                {tab}
              </button>
            ))}
          </div>
        </div>
        <div className="flex pt-[19px] pl-[7px]">
          <NumberBox label="Columns" value="22" className="w-[30px] text-center" />
          <NumberBox label="Rows" value="19" className="ml-[3px] w-[30px] text-center" />
          <button type="button" className="ml-[7px] h-[21px] w-[28px] border border-[#adadad] bg-[#e1e1e1]">1:1</button>
          <button type="button" className="ml-[5px] h-[21px] w-[28px] border border-[#adadad] bg-[#e1e1e1]">Fit</button>
        </div>
      </div>

      <div role="tabpanel" className="mr-[3px] flex flex-1 flex-col border-t border-r border-b border-[#dcdcdc] bg-white pt-px pb-[2px] pl-[3px]">
        <div className="flex flex-1 flex-col bg-[#f0f0f0] pt-[8px]">
          <PartToolbar />
          <div className="pt-[8px]">
            <SchematicPane />
          </div>
          <PartEditor />
        </div>
      </div>
    </section>
  );
}

function ChartPanel() {
  return (
    <section className="flex min-w-0 flex-1 flex-col pr-[3px] pl-[8px]">
      <div className="flex h-[32px] items-center pb-[2px] pl-[4px] whitespace-nowrap">
        <label className="flex items-center">
          <span className="w-[52px]">Ref angle</span>
          <NumberBox label="Reference angle" value="-10" className="w-[40px] text-center" />
        </label>
        <span className="ml-[4px] w-[47px]">deg hor</span>
        <Check label="SPL max" defaultChecked />
        <NumberBox label="Maximum SPL" value="100" className="ml-[6px] w-[40px] text-center" />
        <button type="button" aria-label="Expand scale" className="ml-[4px] flex size-[20px] items-center justify-center border border-[#adadad] bg-[#e1e1e1]">
          <svg viewBox="0 0 14 16" className="h-[16px] w-[14px]" fill="#3c3c3c" aria-hidden="true"><path d="M7 0l6 6H1zM7 16L1 10h12zM0 7.500h14v1H0z" /></svg>
        </button>
        <button type="button" aria-label="Compress scale" className="ml-[2px] flex size-[20px] items-center justify-center border border-[#adadad] bg-[#e1e1e1]">
          <svg viewBox="0 0 14 16" className="h-[16px] w-[14px]" fill="#3c3c3c" aria-hidden="true"><path d="M1 1h12v1.500L7.500 8L13 13.500V15H1v-1.500L6.500 8L1 2.500z" /></svg>
        </button>
        <span className="ml-[9px] w-[24px]">Ovl</span>
        <button type="button" aria-label="Add overlay" className="flex h-[22px] w-[26px] items-center justify-center border border-[#adadad] bg-[#e1e1e1]">
          <svg viewBox="0 0 20 18" className="h-[18px] w-[20px]" aria-hidden="true">
            <rect width="20" height="18" rx="8" fill="#31b093" />
            <path d="M4 9h12M10 3v12" stroke="white" strokeWidth={2.500} />
          </svg>
        </button>
        <button type="button" aria-label="Remove overlay" className="ml-[5px] flex h-[22px] w-[26px] items-center justify-center border border-[#adadad] bg-[#e1e1e1]">
          <svg viewBox="0 0 20 18" className="h-[18px] w-[20px]" aria-hidden="true">
            <rect width="20" height="18" rx="8" fill="#31b093" />
            <path d="M4 9h12" stroke="white" strokeWidth={2.500} />
          </svg>
        </button>
        <NumberBox label="Overlay title" value="CROSOVER BOOXA var2" className="ml-[4px] min-w-0 flex-1" />
        <NumberBox label="Minimum frequency" value="20" className="ml-[5px] w-[35px] text-center" />
        <span className="w-[20px] text-center">...</span>
        <NumberBox label="Maximum frequency" value="20000" className="w-[40px] text-center" />
        <span className="ml-[5px] w-[18px]">Hz</span>
      </div>

      <div className="grid grid-cols-2 gap-x-[5px] gap-y-[6px]">
        {charts.map((chart) => (
          <Chart key={chart.title} {...chart} />
        ))}
      </div>
    </section>
  );
}

export default function App() {
  return (
    <div className="flex min-h-screen flex-col border-r-2 border-b border-r-[#666] border-b-[#20202c] bg-[#f0f0f0] font-['Liberation_Sans',Arial,sans-serif] text-[11px] leading-[14px] text-[#1a1a1a]">
      <TitleBar />
      <main className="flex flex-1 pb-[2px]">
        <CrossoverPanel />
        <ChartPanel />
      </main>
    </div>
  );
}
